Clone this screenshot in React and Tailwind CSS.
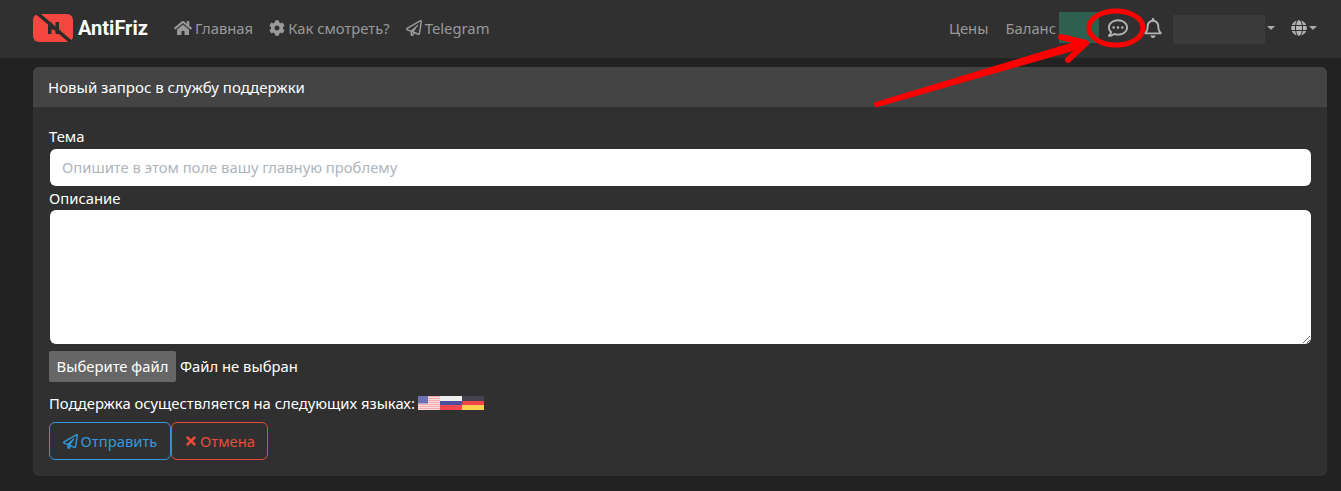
import React from 'react';
import { FaHome, FaCog, FaRegPaperPlane, FaRegCommentDots, FaRegBell, FaGlobe, FaTimes } from 'react-icons/fa';

const NAV_LINKS = [
  { label: 'Главная', icon: FaHome, iconClass: 'text-[18px]' },
  { label: 'Как смотреть?', icon: FaCog, iconClass: 'text-[16px]' },
  { label: 'Telegram', icon: FaRegPaperPlane, iconClass: 'text-[16px]' },
];

const Logo = () => (
  <svg width="42" height="30" viewBox="0 0 42 30" className="shrink-0">
    <rect x="1" y="1" width="40" height="28" rx="6" fill="#f5473f" />
    <path d="M16 9h3.500v4.500h4V9H27v12h-3.500v-4.500h-4V21H16z" fill="#2b2b2b" />
    <path d="M5 0 L39 29" stroke="#2b2b2b" strokeWidth="3.500" />
  </svg>
);

const Caret = () => (
  <span className="ml-[2px] inline-block border-x-[4px] border-t-[4px] border-x-transparent border-t-[#aaaaaa]" />
);

const UsFlag = () => (
  <svg width="22" height="14" viewBox="0 0 22 14" className="block">
    <rect width="22" height="14" fill="#f4a9ac" />
    <path d="M0 1.500h22M0 3.500h22M0 5.500h22M0 7.500h22M0 9.500h22M0 11.500h22M0 13.500h22" stroke="#f7e3e3" strokeWidth="0.900" />
    <rect width="10" height="7.500" fill="#6d72b4" />
  </svg>
);

const RuFlag = () => (
  <div className="w-[22px] h-[14px] flex flex-col">
    <div className="flex-1 bg-[#eeeeee]" />
    <div className="flex-1 bg-[#4e4f9f]" />
    <div className="flex-1 bg-[#f4474f]" />
  </div>
);

const DeFlag = () => (
  <div className="w-[22px] h-[14px] flex flex-col">
    <div className="flex-1 bg-[#444450]" />
    <div className="flex-1 bg-[#ee4444]" />
    <div className="flex-1 bg-[#fbd04f]" />
  </div>
);

// red arrow and ring drawn over the screenshot
const Annotation = () => (
  <svg width="1341" height="110" viewBox="0 0 1341 110" fill="none" className="absolute left-0 top-0 pointer-events-none">
    <path d="M874 103 L1082 40 L1085 47 L876 107 Z" fill="#ff0000" stroke="#ff0000" strokeLinejoin="round" />
    <path d="M1061 37 L1086 43 L1068 60" stroke="#ff0000" strokeWidth="6" strokeLinecap="round" strokeLinejoin="round" />
    <ellipse cx="1116" cy="28" rx="27" ry="17" stroke="#ff0000" strokeWidth="5" />
  </svg>
);

export default function App() {
  return (
    <div className="relative w-[1341px] h-[491px] overflow-hidden bg-[#222222] text-[14.8px] text-white font-['Noto_Sans','Open_Sans',sans-serif]">
      {/* Navbar */}
      <nav className="h-[58px] bg-[#303030] pl-[32px] pr-[24px] flex items-center justify-between">
        <div className="flex items-center -mt-[2px]">
          <Logo />
          <span className="ml-[4px] text-[20px] font-bold font-['Roboto',sans-serif] text-white">AntiFriz</span>
          <div className="ml-[26px] flex items-center gap-[16px] text-[#999999]">
            {NAV_LINKS.map((link) => {
              const Icon = link.icon;
              return (
                <a key={link.label} className="flex items-center gap-[3px]">
                  <Icon className={link.iconClass} />
                  {link.label}
                </a>
              );
            })}
          </div>
        </div>
        <div className="flex items-center text-[#999999] h-full -mt-[2px]">
          <span>Цены</span>
          <span className="ml-[17px]">Баланс</span>
          <div className="ml-[3px] w-[40px] h-[31px] bg-[#2f5f4e] -mt-[2px]" />
          <FaRegCommentDots className="ml-[9px] text-[20px] text-[#b4b4b4]" />
          <FaRegBell className="ml-[15px] text-[20px] text-[#b4b4b4]" />
          <div className="ml-[10px] mt-[2px] w-[92px] h-[29px] bg-[#3a3a3a]" />
          <Caret />
          <FaGlobe className="ml-[16px] text-[16px] text-[#b4b4b4]" />
          <Caret />
        </div>
      </nav>

      {/* Card */}
      <div className="mx-[33px] mt-[9px] h-[409px] w-[1294px] rounded-[6px] bg-[#303030] overflow-hidden">
        <div className="h-[40px] bg-[#444444] px-[15px] flex items-center text-[15px] text-white">
          Новый запрос в службу поддержки
        </div>
        <div className="pl-[16px] pt-[18px]">
          <label className="block leading-[22px] text-white">Тема</label>
          <input
            placeholder="Опишите в этом поле вашу главную проблему"
            className="block ml-[1px] mt-[2px] w-[1261px] h-[37px] rounded-[6px] bg-white px-[12px] pb-[2px] text-[14.8px] text-[#333333] placeholder:text-[#adb5bd] outline-none"
          />
          <label className="block mt-[1px] leading-[22px] text-white">Описание</label>
          <textarea className="block ml-[1px] mt-[1px] w-[1261px] h-[134px] rounded-[6px] bg-white px-[12px] py-[6px] text-[#333333] outline-none" />
          <div className="mt-[7px] flex items-center">
            <button className="h-[31px] w-[127px] rounded-[2px] bg-[#666666] text-white text-[14.8px]">Выберите файл</button>
            <span className="ml-[4px]">Файл не выбран</span>
          </div>
          <div className="mt-[10px] flex items-center h-[22px]">
            <span>Поддержка осуществляется на следующих языках:</span>
            <div className="ml-[3px] flex">
              <UsFlag />
              <RuFlag />
              <DeFlag />
            </div>
          </div>
          <div className="mt-[8px] flex">
            <button className="h-[38px] w-[122px] rounded-[6px] border border-[#3498db] text-[#3498db] flex items-center justify-center gap-[3px]">
              <FaRegPaperPlane className="text-[15px]" />
              Отправить
            </button>
            <button className="h-[38px] w-[97px] rounded-[6px] border border-[#e74c3c] text-[#e74c3c] flex items-center justify-center gap-[2px]">
              <FaTimes className="text-[14px]" />
              Отмена
            </button>
          </div>
        </div>
      </div>

      <Annotation />
    </div>
  );
}
